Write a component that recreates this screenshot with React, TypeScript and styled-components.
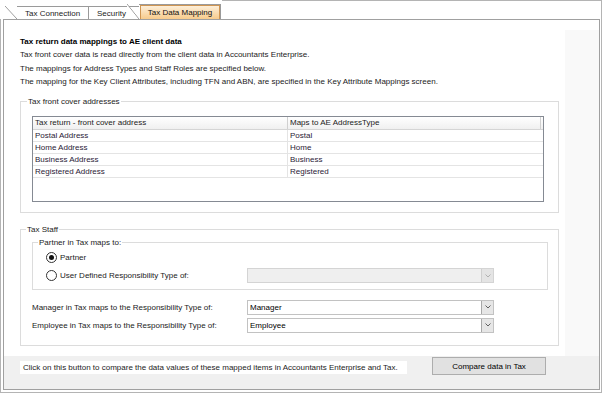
import React from "react";
import styled, { createGlobalStyle } from "styled-components";

const Global = createGlobalStyle`
  html, body { margin: 0; padding: 0; background: #fff; }
  body { font-family: "Liberation Sans", Arial, sans-serif; }
  * { box-sizing: border-box; }
`;

const Window = styled.div`
  width: 602px;
  height: 393px;
  display: flex;
  flex-direction: column;
  background: #fff;
  font-family: "Liberation Sans", Arial, sans-serif;
  font-size: 8px;
  color: #1b1b1b;
`;

const TabStrip = styled.div`
  height: 19px;
  display: flex;
  align-items: flex-end;
  padding-left: 17px;
`;

const Tab = styled.div<{ $active?: boolean; $slant?: boolean; $w: number }>`
  position: relative;
  width: ${(p) => p.$w}px;
  height: ${(p) => (p.$active ? 15 : 13)}px;
  border-top: 1px solid #9a9a9a;
  border-right: ${(p) => (p.$active || p.$slant ? "1px solid #9a9a9a" : "none")};
  background: #fff;
  display: flex;
  align-items: center;
  justify-content: ${(p) => (p.$active ? "stretch" : "flex-start")};
  padding: ${(p) => (p.$active ? "0 0 0 1px" : "0 0 0 8px")};
  z-index: ${(p) => (p.$active ? 2 : 1)};
  white-space: nowrap;
  &::before {
    content: "";
    display: ${(p) => (p.$active || p.$slant ? "block" : "none")};
    position: absolute;
    left: -12px;
    top: -1px;
    width: 12px;
    height: calc(100% + 1px);
    background: linear-gradient(
      to top right,
      #fff calc(50% - 0.7px),
      #9a9a9a 50%,
      transparent calc(50% + 0.7px)
    );
  }
`;

const ActiveFace = styled.div`
  flex: 1;
  height: 14px;
  border: 1px solid #cf9552;
  border-bottom: none;
  background: linear-gradient(#fdeed8, #f7cb8c);
  display: flex;
  align-items: center;
  justify-content: center;
  color: #111;
`;

const StripFill = styled.div`
  flex: 1;
  height: 19px;
  border-top: 1px solid #b4b4b4;
  border-right: 1px solid #b4b4b4;
  margin-left: 1px;
`;

const Frame = styled.div`
  flex: 1;
  display: flex;
  border-left: 1px solid #b4b4b4;
  border-right: 1px solid #b4b4b4;
  border-bottom: 1px solid #b4b4b4;
  padding: 0 1px 2px 2px;
`;

const Panel = styled.div`
  flex: 1;
  display: flex;
  flex-direction: column;
  border: 1px solid #a0a0a0;
  background: #fff;
`;

const Body = styled.div`
  height: 336px;
  display: flex;
`;

const Content = styled.div`
  width: 561px;
  background: #fff;
  padding: 15px 0 0 16px;
  display: flex;
  flex-direction: column;
`;

const SideStrip = styled.div`
  flex: 1;
  margin-top: 10px;
  background: #f9f9f9;
`;

const Heading = styled.div`
  font-weight: bold;
  line-height: 13px;
  color: #000;
`;

const Desc = styled.div`
  line-height: 13.5px;
`;

const Group = styled.fieldset<{ $w: number; $mt: number }>`
  width: ${(p) => p.$w}px;
  margin: ${(p) => p.$mt}px 0 0 0;
  border: 1px solid #dcdcdc;
  padding: 0;
  min-width: 0;
`;

const Legend = styled.legend<{ $ml: number }>`
  font-size: 8px;
  line-height: 10px;
  padding: 0 1px;
  margin-left: ${(p) => p.$ml}px;
`;

const GroupBody = styled.div<{ $pad: string }>`
  padding: ${(p) => p.$pad};
  display: flex;
  flex-direction: column;
`;

const Table = styled.div`
  height: 86px;
  border: 1px solid #858a93;
  background: #fff;
  display: flex;
  flex-direction: column;
`;

const HeaderRow = styled.div`
  height: 13px;
  display: flex;
  background: linear-gradient(#ffffff, #f0f0f0);
  border-bottom: 1px solid #d5d5d5;
  padding-right: 2px;
`;

const HeaderCell = styled.div<{ $w?: number }>`
  ${(p) => (p.$w ? `width: ${p.$w}px;` : "flex: 1;")}
  border-right: 1px solid #d0d0d0;
  padding-left: 2px;
  line-height: 12px;
  white-space: nowrap;
  overflow: hidden;
`;

const Row = styled.div`
  height: 12px;
  display: flex;
  border-bottom: 1px solid #e4e4e4;
  color: #2a1a36;
`;

const Cell = styled.div<{ $w?: number }>`
  ${(p) => (p.$w ? `width: ${p.$w}px; border-right: 1px solid #e4e4e4;` : "flex: 1;")}
  padding-left: 2px;
  line-height: 11px;
  white-space: nowrap;
`;

const RadioRow = styled.div`
  height: 16px;
  display: grid;
  grid-template-columns: 201px 247px;
  align-items: center;
  & + & {
    margin-top: 2px;
  }
`;

const RadioLabel = styled.label`
  display: flex;
  align-items: center;
  gap: 3px;
  color: #1b1b1b;
`;

const RadioCircle = styled.span<{ $on?: boolean }>`
  width: 11px;
  height: 11px;
  border-radius: 50%;
  border: 1px solid #333;
  background: #fff;
  display: flex;
  align-items: center;
  justify-content: center;
  &::after {
    content: "";
    display: ${(p) => (p.$on ? "block" : "none")};
    width: 5px;
    height: 5px;
    border-radius: 50%;
    background: #111;
  }
`;

const FieldRow = styled.div`
  display: grid;
  grid-template-columns: 215px 247px;
  align-items: center;
  height: 15px;
  & + & {
    margin-top: 3px;
  }
`;

const Select = styled.div<{ $disabled?: boolean }>`
  height: 15px;
  border: 1px solid ${(p) => (p.$disabled ? "#d4d4d4" : "#c2c2c2")};
  background: ${(p) => (p.$disabled ? "#efefef" : "#fff")};
  display: flex;
  align-items: stretch;
  padding: 0 0 0 2px;
`;

const SelectText = styled.div`
  flex: 1;
  line-height: 13px;
  color: #000;
`;

const ArrowBox = styled.div<{ $disabled?: boolean }>`
  width: 12px;
  border-left: 1px solid ${(p) => (p.$disabled ? "#cfcfcf" : "#a8a8a8")};
  background: ${(p) => (p.$disabled ? "#e4e4e4" : "#e6e6e6")};
  display: flex;
  align-items: center;
  justify-content: center;
`;

const Footer = styled.div`
  flex: 1;
  background: #f0f0f0;
  display: flex;
  align-items: flex-start;
  padding-left: 16px;
`;

const Note = styled.div`
  width: 387px;
  height: 13px;
  margin-top: 5px;
  background: #fff;
  padding-left: 3px;
  line-height: 13px;
  white-space: nowrap;
`;

const Button = styled.button`
  width: 114px;
  height: 18px;
  margin: 1px 0 0 25px;
  border: 1px solid #adadad;
  background: #e1e1e1;
  font-family: "Liberation Sans", Arial, sans-serif;
  font-size: 8px;
  color: #000;
  padding: 0;
`;

const Spacer = styled.div`
  height: 10px;
`;

const Chevron = ({ disabled }: { disabled?: boolean }) => (
  <svg width="6" height="4" viewBox="0 0 6 4">
    <path d="M0.5 0.5 L3 3 L5.5 0.5" fill="none" stroke={disabled ? "#b0b0b0" : "#606060"} strokeWidth="1" />
  </svg>
);

const rows: [string, string][] = [
  ["Postal Address", "Postal"],
  ["Home Address", "Home"],
  ["Business Address", "Business"],
  ["Registered Address", "Registered"],
];

export default function App() {
  return (
    <>
      <Global />
      <Window>
        <TabStrip>
          <Tab $w={72} $slant>Tax Connection</Tab>
          <Tab $w={50}>Security</Tab>
          <Tab $w={82} $active>
            <ActiveFace>Tax Data Mapping</ActiveFace>
          </Tab>
          <StripFill />
        </TabStrip>
        <Frame>
          <Panel>
            <Body>
              <Content>
                <Heading>Tax return data mappings to AE client data</Heading>
                <Desc>Tax front cover data is read directly from the client data in Accountants Enterprise.</Desc>
                <Desc>The mappings for Address Types and Staff Roles are specified below.</Desc>
                <Desc>The mapping for the Key Client Attributes, including TFN and ABN, are specified in the Key Attribute Mappings screen.</Desc>
                <Group $w={539} $mt={8}>
                  <Legend $ml={6}>Tax front cover addresses</Legend>
                  <GroupBody $pad="9px 14px 10px 11px">
                    <Table>
                      <HeaderRow>
                        <HeaderCell $w={255}>Tax return - front cover address</HeaderCell>
                        <HeaderCell>Maps to AE AddressType</HeaderCell>
                      </HeaderRow>
                      {rows.map(([a, b]) => (
                        <Row key={a}>
                          <Cell $w={255}>{a}</Cell>
                          <Cell>{b}</Cell>
                        </Row>
                      ))}
                    </Table>
                  </GroupBody>
                </Group>
                <Group $w={539} $mt={12}>
                  <Legend $ml={5}>Tax Staff</Legend>
                  <GroupBody $pad="3px 10px 12px 11px">
                    <Group $w={516} $mt={0}>
                      <Legend $ml={5}>Partner in Tax maps to:</Legend>
                      <GroupBody $pad="2px 0 5px 13px">
                        <RadioRow>
                          <RadioLabel>
                            <RadioCircle $on />
                            Partner
                          </RadioLabel>
                        </RadioRow>
                        <RadioRow>
                          <RadioLabel>
                            <RadioCircle />
                            User Defined Responsibility Type of:
                          </RadioLabel>
                          <Select $disabled>
                            <SelectText />
                            <ArrowBox $disabled>
                              <Chevron disabled />
                            </ArrowBox>
                          </Select>
                        </RadioRow>
                      </GroupBody>
                    </Group>
                    <Spacer />
                    <FieldRow>
                      <span>Manager in Tax maps to the Responsibility Type of:</span>
                      <Select>
                        <SelectText>Manager</SelectText>
                        <ArrowBox>
                          <Chevron />
                        </ArrowBox>
                      </Select>
                    </FieldRow>
                    <FieldRow>
                      <span>Employee in Tax maps to the Responsibility Type of:</span>
                      <Select>
                        <SelectText>Employee</SelectText>
                        <ArrowBox>
                          <Chevron />
                        </ArrowBox>
                      </Select>
                    </FieldRow>
                  </GroupBody>
                </Group>
              </Content>
              <SideStrip />
            </Body>
            <Footer>
              <Note>Click on this button to compare the data values of these mapped items in Accountants Enterprise and Tax.</Note>
              <Button>Compare data in Tax</Button>
            </Footer>
          </Panel>
        </Frame>
      </Window>
    </>
  );
}
